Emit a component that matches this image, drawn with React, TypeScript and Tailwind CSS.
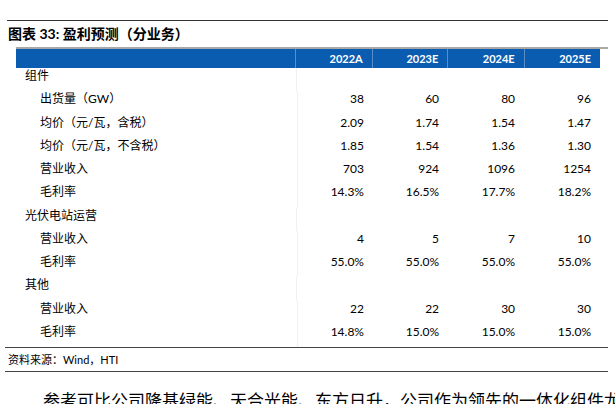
import React from "react";

type Row = { label: string; sub: boolean; v?: string[] };

const rows: Row[] = [
  { label: "组件", sub: false },
  { label: "出货量（GW）", sub: true, v: ["38", "60", "80", "96"] },
  { label: "均价（元/瓦，含税）", sub: true, v: ["2.09", "1.74", "1.54", "1.47"] },
  { label: "均价（元/瓦，不含税）", sub: true, v: ["1.85", "1.54", "1.36", "1.30"] },
  { label: "营业收入", sub: true, v: ["703", "924", "1096", "1254"] },
  { label: "毛利率", sub: true, v: ["14.3%", "16.5%", "17.7%", "18.2%"] },
  { label: "光伏电站运营", sub: false },
  { label: "营业收入", sub: true, v: ["4", "5", "7", "10"] },
  { label: "毛利率", sub: true, v: ["55.0%", "55.0%", "55.0%", "55.0%"] },
  { label: "其他", sub: false },
  { label: "营业收入", sub: true, v: ["22", "22", "30", "30"] },
  { label: "毛利率", sub: true, v: ["14.8%", "15.0%", "15.0%", "15.0%"] },
];

const colW = ["w-[87px]", "w-[86px]", "w-[87px]", "w-[87px]"];
const years = ["2022A", "2023E", "2024E", "2025E"];

export default function App() {
  return (
    <div className="w-[615px] h-[404px] overflow-hidden bg-white text-black font-['Lato','Noto_Sans_CJK_SC',sans-serif]">
      <div className="h-[20px]" />
      <div className="ml-[7px] w-[601px] h-px bg-[#333]" />
      <div className="h-[26px] flex items-center pl-[8px] text-[14px] font-bold leading-none">
        图表 33: 盈利预测（分业务）
      </div>
      <div className="ml-[16px] w-[592px] h-[2px] bg-[#a8a8a8]" />
      <div className="ml-[16px] w-[584px] h-[19px] bg-[#0a5cb1] flex text-white text-[11px] font-bold leading-none">
        <div className="w-[324px]" />
        {years.map((y, i) => (
          <div
            key={y}
            className={`${colW[i]} border-l border-[#5d8cc6] flex items-center justify-end pr-[9px]`}
          >
            {y}
          </div>
        ))}
      </div>
      <div className="ml-[16px] w-[584px]">
        {rows.map((r, ri) => (
          <div key={ri} className="h-[23.25px] flex text-[12px] leading-[16px]">
            <div
              className={`w-[324px] whitespace-nowrap ${r.sub ? "pl-[24px]" : "pl-[9px]"}`}
            >
              {r.label}
            </div>
            {[0, 1, 2, 3].map((i) => (
              <div
                key={i}
                className={`${colW[i]} flex justify-end pr-[9px] ${
                  i === 0 ? "border-l border-[#f0f0f0]" : "border-l border-transparent"
                }`}
              >
                {r.v ? r.v[i] : ""}
              </div>
            ))}
          </div>
        ))}
      </div>
      <div className="ml-[5px] w-[603px] h-px bg-[#444]" />
      <div className="h-[23px] flex items-center pl-[8px] text-[11px] leading-none">
        资料来源：Wind，HTI
      </div>
      <div className="ml-[5px] w-[603px] h-px bg-[#444]" />
      <div className="pt-[16px] pl-[43px] whitespace-nowrap text-[17px] leading-[24px] font-['Noto_Sans_CJK_SC',sans-serif]">
        参考可比公司隆基绿能、天合光能、东方日升，公司作为领先的一体化组件龙头
      </div>
    </div>
  );
}
